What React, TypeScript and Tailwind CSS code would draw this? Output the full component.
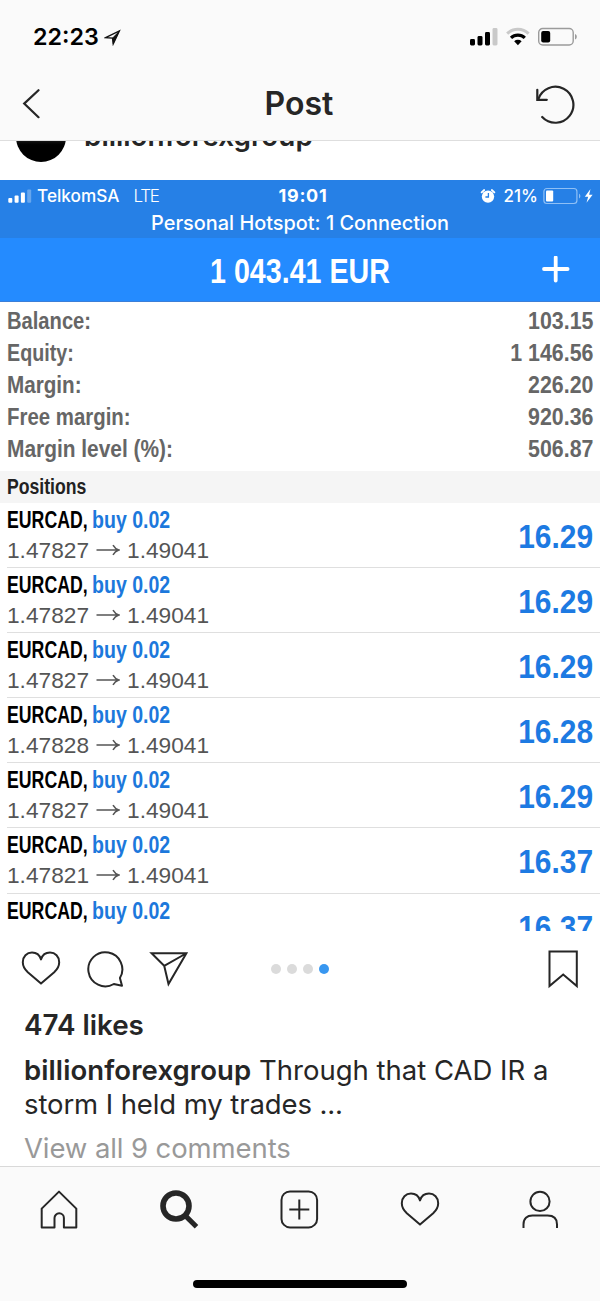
import React from "react";

interface Position {
  open?: string;
  current?: string;
  profit: string;
}

const summary = [
  { label: "Balance:", value: "103.15", fit: "scale-x-[0.84]" },
  { label: "Equity:", value: "1 146.56", fit: "scale-x-[0.82]" },
  { label: "Margin:", value: "226.20", fit: "scale-x-[0.86]" },
  { label: "Free margin:", value: "920.36", fit: "scale-x-[0.85]" },
  { label: "Margin level (%):", value: "506.87", fit: "scale-x-[0.87]" },
];

const positions: Position[] = [
  { open: "1.47827", current: "1.49041", profit: "16.29" },
  { open: "1.47827", current: "1.49041", profit: "16.29" },
  { open: "1.47827", current: "1.49041", profit: "16.29" },
  { open: "1.47828", current: "1.49041", profit: "16.28" },
  { open: "1.47827", current: "1.49041", profit: "16.29" },
  { open: "1.47821", current: "1.49041", profit: "16.37" },
  { profit: "16.37" },
];

const HEART =
  "M20 33.6 L6.8 22.2 C3.2 18.8 1.8 15.8 1.8 12.2 C1.8 6.6 5.8 2.6 11 2.6 C15.6 2.6 18.6 5 20 9.4 C21.4 5 24.4 2.6 29 2.6 C34.2 2.6 38.2 6.6 38.2 12.2 C38.2 15.8 36.8 18.8 33.2 22.2 Z";

function StatusBar() {
  return (
    <div className="flex h-[68px] items-start justify-between pt-[23px] pr-[22px] pl-[33px]">
      <div className="flex items-center gap-[5px]">
        <span className="text-[23.3px] leading-[28px] font-semibold text-black">22:23</span>
        <svg width="17" height="17" viewBox="0 0 17 17" fill="none" stroke="#111" strokeWidth="1.3">
          <path d="M1.6 8.6 L15.4 1.8 L9.2 15 L8.5 9 Z" />
          <path d="M15.4 1.8 L8.5 9 L9.2 15 Z" fill="#111" strokeWidth="0.4" />
        </svg>
      </div>
      <svg className="mt-1" width="108" height="20" viewBox="0 0 108 20">
        <rect x="0" y="12" width="5" height="6.5" rx="1.4" fill="#000" />
        <rect x="7.5" y="9" width="5" height="9.5" rx="1.4" fill="#000" />
        <rect x="15" y="5" width="5" height="13.5" rx="1.4" fill="#000" />
        <rect x="22.5" y="1" width="5" height="17.5" rx="1.4" fill="#c9c9c9" />
        <g fill="none">
          <path d="M37.2 6.6 A15.4 15.4 0 0 1 58.6 6.6" stroke="#c9c9c9" strokeWidth="3" />
          <path d="M41 10.8 A10 10 0 0 1 54.8 10.8" stroke="#000" strokeWidth="3.2" />
        </g>
        <path d="M44.2 14.2 A5.4 5.4 0 0 1 51.6 14.2 L47.9 18.2 Z" fill="#000" />
        <rect x="68.7" y="1.5" width="34.5" height="16.5" rx="4" fill="none" stroke="#9b9b9b" strokeWidth="1.4" />
        <rect x="71.2" y="4" width="9" height="11.5" rx="2" fill="#000" />
        <path d="M105 7 C107.4 7.8 107.4 11.7 105 12.5 Z" fill="#9b9b9b" />
      </svg>
    </div>
  );
}

function NavBar() {
  return (
    <div className="grid h-[72px] grid-cols-3 items-center pr-[24px] pl-[22px] text-[#262626]">
      <svg width="18" height="32" viewBox="0 0 18 32" fill="none" stroke="currentColor" strokeWidth="2.2">
        <path d="M16.5 2.2 L2.2 15.6 L16.5 29.2" strokeLinecap="round" />
      </svg>
      <h1 className="text-center text-[32px] leading-[40px] font-semibold">Post</h1>
      <svg className="justify-self-end" width="42" height="40" viewBox="0 0 42 40" fill="none" stroke="currentColor" strokeWidth="2.2" strokeLinecap="round">
        <path d="M8.2 33 A18 18 0 1 0 4.2 15.4" />
        <path d="M3.3 5.8 V15.8 H12.8" />
      </svg>
    </div>
  );
}

function TradingHeader() {
  return (
    <div className="font-medium text-white">
      <div className="h-[58px] bg-[#2680e6] pt-[4px]">
        <div className="grid h-[24px] grid-cols-3 items-center pr-[6px] pl-[8px]">
          <div className="flex items-center">
            <svg width="24" height="14" viewBox="0 0 24 14" fill="#fff">
              <rect x="0.3" y="9" width="4" height="4.8" rx="1" />
              <rect x="6.6" y="6.6" width="4" height="7.2" rx="1" />
              <rect x="12.9" y="3.4" width="4" height="10.4" rx="1" />
              <rect x="19.2" y="0.4" width="4" height="13.4" rx="1" opacity="0.3" />
            </svg>
            <span className="ml-[5px] text-[17.2px] leading-[22px]">TelkomSA</span>
            <span className="ml-[14px] text-[17px] leading-[22px] font-light tracking-[-1.2px]">LTE</span>
          </div>
          <span className="pl-[4px] text-center text-[18px] leading-[22px] font-bold tracking-[0.7px]">19:01</span>
          <div className="flex items-center justify-end">
            <svg width="16" height="16" viewBox="0 0 16 16" fill="none" stroke="#fff">
              <circle cx="8" cy="8.6" r="6.2" fill="#fff" stroke="none" />
              <path d="M1.6 4.4 L4.2 2 M14.4 4.4 L11.8 2" strokeWidth="1.8" strokeLinecap="round" />
              <path d="M8.4 5 V9 H5.4" stroke="#2680e6" strokeWidth="1.3" />
            </svg>
            <span className="ml-[8px] text-[17px] leading-[22px]">21%</span>
            <svg className="ml-[5px]" width="51" height="18" viewBox="0 0 51 18">
              <rect x="0.9" y="1.5" width="33" height="15" rx="3" fill="none" stroke="#8fc0f6" strokeWidth="1.2" />
              <rect x="3" y="3.6" width="7.2" height="10.8" rx="1" fill="#fff" />
              <path d="M36 6.8 C37.8 7.4 37.8 10.8 36 11.4 Z" fill="#8fc0f6" />
              <path d="M47.5 2 L41.8 9.8 H45.2 L43.5 15.8 L49.6 7.8 H46.1 Z" fill="#fff" />
            </svg>
          </div>
        </div>
        <p className="text-center text-[19.9px] leading-[30px]">Personal Hotspot: 1 Connection</p>
      </div>
      <div className="grid h-[64px] grid-cols-[80px_1fr_80px] items-center border-b border-[#3c7fd8] bg-[#248bff] pt-[2px]">
        <span />
        <span className="scale-x-[0.83] text-center font-['Liberation_Sans',sans-serif] text-[34.5px] leading-[40px] font-bold whitespace-nowrap">
          1 043.41 EUR
        </span>
        <svg className="ml-[21px]" width="30" height="30" viewBox="0 0 30 30" stroke="#fff" strokeWidth="3.8" strokeLinecap="round">
          <path d="M14.7 1.5 V24.5 M3 13 H26.6" />
        </svg>
      </div>
    </div>
  );
}

function PositionRow({ open, current, profit }: Position) {
  return (
    <div className="ml-[7px] flex h-[65.2px] shrink-0 justify-between border-b border-[#dfdfdf] pt-[2px] pr-[7px]">
      <div>
        <div className="flex text-[23px] leading-[30px] font-bold whitespace-nowrap">
          <span className="w-[85px]">
            <span className="inline-block origin-left scale-x-[0.77] text-black">EURCAD,</span>
          </span>
          <span className="origin-left scale-x-[0.85] text-[#1c78dc]">buy 0.02</span>
        </div>
        {open && (
          <div className="flex items-center text-[22.7px] leading-[30px] text-[#555]">
            <span>{open}</span>
            <svg className="mx-[7px]" width="24" height="12" viewBox="0 0 24 12" fill="none" stroke="#555" strokeWidth="1.5">
              <path d="M0.5 6 H22.5 M17 1.2 C18.5 4 20.2 5.2 22.8 6 C20.2 6.8 18.5 8 17 10.8" />
            </svg>
            <span>{current}</span>
          </div>
        )}
      </div>
      <span className="origin-right scale-x-[0.88] text-[34px] leading-[63px] font-bold text-[#1d7ae2]">{profit}</span>
    </div>
  );
}

function AccountShot() {
  return (
    <div className="flex h-[751px] flex-col overflow-hidden bg-white">
      <TradingHeader />
      <div className="font-['Liberation_Sans',sans-serif]">
        <dl className="px-[7px] pt-[3px] pb-[6px] text-[24px] leading-[32px] font-bold text-[#666]">
          {summary.map((row) => (
            <div key={row.label} className="flex justify-between whitespace-nowrap">
              <dt className={`origin-left ${row.fit}`}>{row.label}</dt>
              <dd className="origin-right scale-x-[0.89]">{row.value}</dd>
            </div>
          ))}
        </dl>
        <div className="flex h-[31.5px] items-center bg-[#f5f5f5] pt-[1px] pl-[7px] text-[21.5px] font-bold text-[#222]">
          <span className="origin-left scale-x-[0.82]">Positions</span>
        </div>
        {positions.map((position, i) => (
          <PositionRow key={i} {...position} />
        ))}
      </div>
    </div>
  );
}

function PostActions() {
  return (
    <div className="mb-[2px] grid h-[75px] grid-cols-[1fr_auto_1fr] items-center pr-[21px] pl-[21px] text-[#262626]">
      <div className="flex items-center gap-[25px]">
        <svg width="40" height="38" viewBox="0 0 40 38" fill="none" stroke="currentColor" strokeWidth="2" strokeLinejoin="round">
          <path d={HEART} />
        </svg>
        <svg width="38" height="38" viewBox="0 0 38 38" fill="none" stroke="currentColor" strokeWidth="2" strokeLinejoin="round">
          <path d="M36 35.8 L33.9 28 A17 17 0 1 0 27.8 34 Z" />
        </svg>
        <svg width="40" height="38" viewBox="0 0 40 38" fill="none" stroke="currentColor" strokeWidth="2">
          <path d="M2.6 3.2 H37.4 L19.5 34 L15.2 15.8 Z M15.2 15.8 L37 3.5" />
        </svg>
      </div>
      <div className="flex gap-[6px]">
        <span className="size-[10px] rounded-full bg-[#dbdbdb]" />
        <span className="size-[10px] rounded-full bg-[#dbdbdb]" />
        <span className="size-[10px] rounded-full bg-[#dbdbdb]" />
        <span className="size-[10px] rounded-full bg-[#3897f0]" />
      </div>
      <svg className="justify-self-end" width="32" height="42" viewBox="0 0 32 42" fill="none" stroke="currentColor" strokeWidth="2">
        <path d="M2.5 3.4 H29.8 V38 L16.2 26.6 L2.5 38 Z" />
      </svg>
    </div>
  );
}

function TabBar() {
  return (
    <nav className="h-[135px] border-t border-[#d9d9d9] bg-[#fafafa] text-[#262626]">
      <div className="grid h-[86px] grid-cols-5 place-items-center">
        <svg width="40" height="40" viewBox="0 0 40 40" fill="none" stroke="currentColor" strokeWidth="2" strokeLinejoin="round">
          <path d="M19 1.6 L1.7 18.6 V37.4 H14.5 V28 A4.7 4.7 0 0 1 23.9 28 V37.4 H36.3 V18.6 Z" />
        </svg>
        <svg width="40" height="40" viewBox="0 0 40 40" fill="none" stroke="currentColor">
          <circle cx="16" cy="16" r="13" strokeWidth="5.6" />
          <path d="M25 25.4 L36.5 36.7" strokeWidth="5" />
        </svg>
        <svg width="40" height="40" viewBox="0 0 40 40" fill="none" stroke="currentColor" strokeWidth="2">
          <rect x="1.5" y="1.4" width="35.6" height="36" rx="8.5" />
          <path d="M9.3 19.4 H29.3 M19.3 9.4 V29.6" />
        </svg>
        <svg width="40" height="38" viewBox="0 0 40 38" fill="none" stroke="currentColor" strokeWidth="2" strokeLinejoin="round">
          <path d={HEART} />
        </svg>
        <svg width="40" height="40" viewBox="0 0 40 40" fill="none" stroke="currentColor" strokeWidth="2">
          <circle cx="20" cy="11.4" r="9.6" />
          <path d="M3.5 38 V34.4 C3.5 28.4 7 25.6 12.5 25.6 H27.5 C33 25.6 37 28.4 37 34.4 V38" />
        </svg>
      </div>
      <div className="mx-auto mt-[27px] h-[8px] w-[214px] rounded-full bg-black" />
    </nav>
  );
}

export default function App() {
  return (
    <div className="flex h-[1301px] w-[600px] flex-col overflow-hidden bg-white font-['Inter',sans-serif]">
      <header className="h-[141px] shrink-0 border-b border-[#dedede] bg-[#fafafa]">
        <StatusBar />
        <NavBar />
      </header>

      {/* Author row, scrolled mostly under the header */}
      <div className="h-[39px] shrink-0 overflow-hidden">
        <div className="-mt-[29px] flex h-[50px] items-center gap-[18px] pl-[16px]">
          <span className="size-[50px] rounded-full bg-gradient-to-b from-[#333] from-50% to-black to-70%" />
          <span className="pb-[3px] text-[27.9px] leading-[34px] font-semibold text-[#262626]">billionforexgroup</span>
        </div>
      </div>

      <div className="shrink-0">
        <AccountShot />
        <PostActions />
      </div>

      <div className="h-[158px] shrink-0 pl-[24px] text-[27.5px] leading-[34px] text-[#262626]">
        <p className="text-[27.8px] font-semibold">474 likes</p>
        <p className="mt-[11px] tracking-[-0.1px]">
          <span className="font-semibold tracking-[0.1px]">billionforexgroup</span>
          <span className="tracking-normal"> Through that CAD IR a</span>
          <br />
          storm I held my trades ...
        </p>
        <p className="mt-[10px] tracking-[-0.1px] text-[#999]">View all 9 comments</p>
      </div>

      <TabBar />
    </div>
  );
}
